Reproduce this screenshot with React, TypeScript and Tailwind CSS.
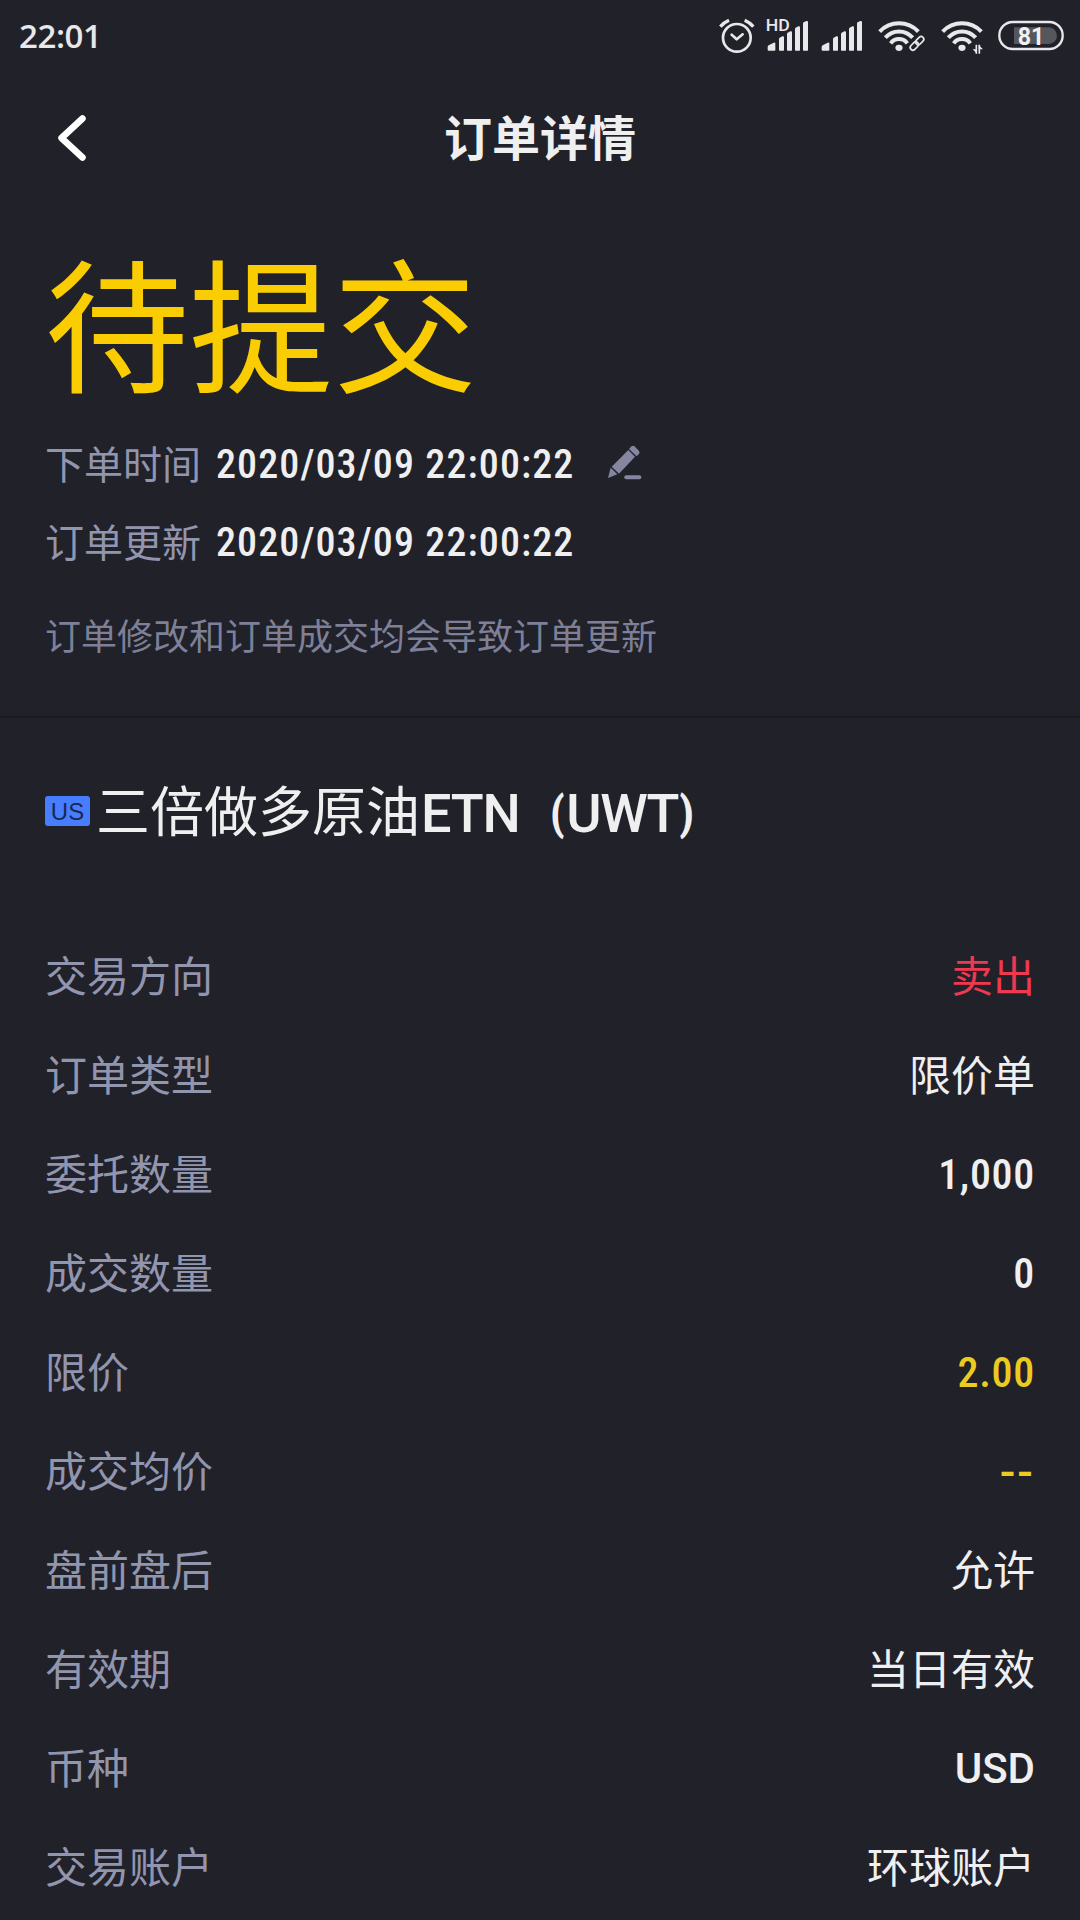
import type { ReactNode } from 'react'

type Tone = 'plain' | 'sell' | 'price'
type Face = 'cjk' | 'number' | 'caps' | 'dash'

interface DetailItem {
  label: string
  value: string
  face?: Face
  tone?: Tone
}

const details: DetailItem[] = [
  { label: '交易方向', value: '卖出', tone: 'sell' },
  { label: '订单类型', value: '限价单' },
  { label: '委托数量', value: '1,000', face: 'number' },
  { label: '成交数量', value: '0', face: 'number' },
  { label: '限价', value: '2.00', face: 'number', tone: 'price' },
  { label: '成交均价', value: '--', face: 'dash', tone: 'price' },
  { label: '盘前盘后', value: '允许' },
  { label: '有效期', value: '当日有效' },
  { label: '币种', value: 'USD', face: 'caps' },
  { label: '交易账户', value: '环球账户' },
]

const toneClass: Record<Tone, string> = {
  plain: 'text-[#efeff0]',
  sell: 'text-[#f0384f]',
  price: 'text-[#eccb20]',
}

const faceClass: Record<Face, string> = {
  cjk: 'pb-0.5',
  number: "pt-1 font-['Roboto',sans-serif] font-[480] tracking-[0.7px] [font-stretch:87%]",
  caps: "pt-1 font-['Roboto',sans-serif] font-[480] [font-stretch:96%]",
  dash: "pt-1 font-['Roboto',sans-serif] text-[46px] font-[480] tracking-[2px]",
}

function SignalBars({ x }: { x: number }) {
  return (
    <g fill="#e8e8ea">
      <path d={`M${x} 150v-9q0-3 3-5l15-8q5-2 5 3v19q0 2-2 2h-18q-3 0-3-2z`} />
      <path d={`M${x + 34} 150v-33q0-3 2-4l8-4q5-1 5 3v38q0 2-2 2h-11q-2 0-2-2z`} />
      <path d={`M${x + 58} 150v-48q0-3 2-4l8-4q5-1 5 3v53q0 2-2 2h-11q-2 0-2-2z`} />
      <path d={`M${x + 82} 150v-63q0-3 2-4l8-4q5-1 5 3v68q0 2-2 2h-11q-2 0-2-2z`} />
      <path d={`M${x + 106} 150v-79q0-3 2-4l8-4q5-1 5 3v84q0 2-2 2h-11q-2 0-2-2z`} />
    </g>
  )
}

function WifiArcs({ x }: { x: number }) {
  return (
    <g fill="none" stroke="#e8e8ea" strokeWidth="12">
      <path d={`M${x - 58} 95a80 80 0 0 1 116 0`} />
      <path d={`M${x - 41} 113a54 54 0 0 1 82 0`} />
      <path d={`M${x - 25} 130a31 31 0 0 1 50 0`} />
      <path d={`M${x - 11} 144q0-10 11-10t11 10q-2 9-11 9t-11-9z`} fill="#e8e8ea" stroke="none" />
    </g>
  )
}

function StatusBar() {
  return (
    <div className="flex h-[72px] items-center justify-between pr-[15px] pl-[19px]">
      <span className="pb-px font-['Open_Sans',sans-serif] text-[33px] leading-none font-semibold tracking-[-0.4px] text-[#e8e8ea]">22:01</span>
      <div className="flex items-center">
        <svg className="h-[40px] w-[38px]" viewBox="54 48 114 120" fill="none" stroke="#e8e8ea" strokeWidth="8">
          <circle cx="110.500" cy="113.500" r="41.500" />
          <path d="M61 80q12-13 26-19M160 80q-12-13-26-19" strokeWidth="10" />
          <path d="M95 104l15 14 18-15" strokeWidth="8" strokeLinecap="round" strokeLinejoin="round" />
        </svg>
        <svg className="ml-[9px] h-[40px] w-[45px]" viewBox="195 48 135 120">
          <text x="197" y="94" fontFamily="Roboto" fontSize="48" fontWeight="500" textLength="72" lengthAdjust="spacingAndGlyphs" fill="#e8e8ea">HD</text>
          <SignalBars x={203} />
        </svg>
        <svg className="ml-[10px] h-[40px] w-[44px]" viewBox="360 48 132 120">
          <SignalBars x={365} />
        </svg>
        <svg className="ml-[12px] h-[40px] w-[51px]" viewBox="528 48 153 120">
          <WifiArcs x={597} />
          <path d="M640 141l22-22" stroke="#21212a" strokeWidth="34" strokeLinecap="round" />
          <g fill="none" stroke="#e8e8ea" strokeWidth="5">
            <rect x="-14" y="-8" width="28" height="16" rx="8" transform="translate(659 122) rotate(-45)" />
            <rect x="-14" y="-8" width="28" height="16" rx="8" transform="translate(643 138) rotate(-45)" />
          </g>
        </svg>
        <svg className="ml-[12px] h-[40px] w-[47px]" viewBox="717 48 141 120">
          <WifiArcs x={786} />
          <path d="M829 134v27M838 134v27" stroke="#e8e8ea" strokeWidth="5" />
          <path d="M831 161l-13-13h13zM836 135l13 13h-13z" fill="#e8e8ea" />
        </svg>
        <svg className="ml-[11px] h-[40px] w-[68px]" viewBox="891 48 204 120">
          <rect x="898" y="66" width="190" height="81" rx="40" fill="none" stroke="#e8e8ea" strokeWidth="7" />
          <path d="M942 82h104a25 25 0 0 1 0 50H942z" fill="#56565d" />
          <text x="953" y="134" fontFamily="Roboto" fontSize="77" fontWeight="700" textLength="80" lengthAdjust="spacingAndGlyphs" fill="#f0f0f1">81</text>
        </svg>
      </div>
    </div>
  )
}

function Header() {
  return (
    <div className="grid h-[132px] grid-cols-[1fr_auto_1fr] items-center px-[54px]">
      <svg className="h-[52px] w-[36px]" viewBox="0 0 36 52" fill="none" stroke="#ffffff" strokeWidth="6.500" strokeLinecap="round" strokeLinejoin="round">
        <path d="M28.500 6.500L7.500 26l21 19.500" />
      </svg>
      <h1 className="pb-[7px] text-[48px] leading-none font-bold text-[#efeff0]">订单详情</h1>
    </div>
  )
}

function EditIcon() {
  return (
    <svg className="ml-[34px] h-[36px] w-[34px]" viewBox="0 0 34 36" fill="#8587a1">
      <path d="M20.300 5L27 11.700 11 28.700 3.700 21.700z" />
      <path d="M21 4l2.500-2.700q1.500-1.300 3 0l4.500 4.700q1.200 1.500 0 3l-2.500 2.300z" />
      <path d="M2.700 22.700l6.600 6.600L0 33z" />
      <rect x="16.300" y="30.300" width="17" height="4" rx="2" />
    </svg>
  )
}

function TimeLine({ label, time, children }: { label: string; time: string; children?: ReactNode }) {
  return (
    <div className="flex h-[78px] items-center">
      <span className="pb-0.5 text-[39px] leading-none text-[#9295ae]">{label}</span>
      <span className="ml-[15px] pt-1 font-['Roboto',sans-serif] text-[40px] leading-none font-[480] tracking-[1.1px] text-[#efeff0] [font-stretch:87%]">
        {time}
      </span>
      {children}
    </div>
  )
}

function OrderStatus() {
  return (
    <section className="h-[514px] border-b-2 border-[#191920] px-[45px] pt-[43px]">
      <div className="text-[144px] leading-[144px] text-[#f9cd02]">待提交</div>
      <div className="mt-[33px]">
        <TimeLine label="下单时间" time="2020/03/09 22:00:22">
          <EditIcon />
        </TimeLine>
        <TimeLine label="订单更新" time="2020/03/09 22:00:22" />
      </div>
      <p className="mt-[36px] text-[36px] leading-none text-[#7e8098]">订单修改和订单成交均会导致订单更新</p>
    </section>
  )
}

function DetailRow({ item }: { item: DetailItem }) {
  return (
    <div className="flex h-[99px] items-center justify-between text-[42px] leading-none">
      <span className="pb-0.5 text-[#9295ae]">{item.label}</span>
      <span className={`leading-none ${toneClass[item.tone ?? 'plain']} ${faceClass[item.face ?? 'cjk']}`}>{item.value}</span>
    </div>
  )
}

export default function App() {
  return (
    <main className="h-[1920px] w-[1080px] overflow-hidden bg-[#21212a] font-['Noto_Sans_CJK_SC',sans-serif]">
      <StatusBar />
      <Header />
      <OrderStatus />
      <section className="px-[45px] pt-[51px]">
        <div className="flex h-[84px] items-center">
          <span className="flex h-[30px] w-[45px] items-center justify-center rounded-[3px] bg-[#477eff] pt-px font-['Liberation_Sans',sans-serif] text-[24px] leading-none text-[#1b2750]">
            US
          </span>
          <h2 className="ml-[6px] flex items-center text-[54px] leading-none text-[#efeff0]">
            <span className="pb-1">三倍做多原油</span>
            <span className="ml-px pt-[5px] font-['Roboto',sans-serif] font-[480] tracking-[-1.2px]">ETN</span>
            <span className="ml-[30px] flex items-center pt-[5px] font-['Roboto',sans-serif] font-[480] tracking-[-1.5px]">
              <span className="pr-[3px] pb-0.5 text-[47px] leading-none font-bold [font-stretch:75%]">(</span>
              <span>UWT</span>
              <span className="pb-0.5 pl-px text-[47px] leading-none font-bold [font-stretch:75%]">)</span>
            </span>
          </h2>
        </div>
        <div className="mt-[72px]">
          {details.map((item) => (
            <DetailRow key={item.label} item={item} />
          ))}
        </div>
      </section>
    </main>
  )
}
